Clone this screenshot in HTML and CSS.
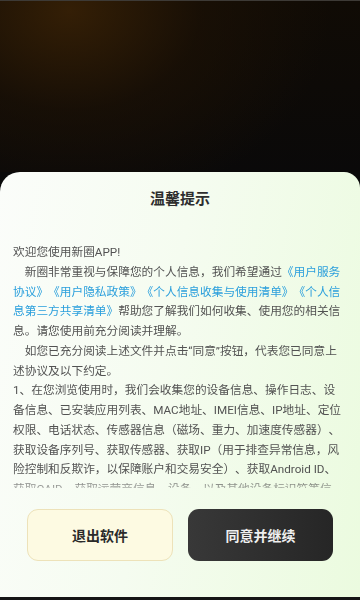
FILE: index.html
```html
<!DOCTYPE html>
<html lang="zh-CN">
<head>
<meta charset="utf-8">
<title>温馨提示</title>
<link rel="stylesheet" href="styles.css">
</head>
<body>
<div class="screen">
  <div class="backdrop"></div>
  <div class="sheet">
    <h1 class="title">温馨提示</h1>
    <div class="content">
      <p class="line">欢迎您使用新圈APP!</p>
      <p class="para">新圈非常重视与保障您的个人信息，我们希望通过<span class="link">《用户服务协议》</span><span class="link">《用户隐私政策》</span><span class="link">《个人信息收集与使用清单》</span><span class="link">《个人信息第三方共享清单》</span>帮助您了解我们如何收集、使用您的相关信息。请您使用前充分阅读并理解。</p>
      <p class="para">如您已充分阅读上述文件并点击“同意”按钮，代表您已同意上述协议及以下约定。</p>
      <p class="line">1、在您浏览使用时，我们会收集您的设备信息、操作日志、设备信息、已安装应用列表、MAC地址、IMEI信息、IP地址、定位权限、电话状态、传感器信息（磁场、重力、加速度传感器）、获取设备序列号、获取传感器、获取IP（用于排查异常信息，风险控制和反欺诈，以保障账户和交易安全）、获取Android ID、获取OAID、获取运营商信息、设备、以及其他设备标识符等信息用于统计分析。</p>
    </div>
    <div class="actions">
      <button class="btn btn-exit">退出软件</button>
      <button class="btn btn-agree">同意并继续</button>
    </div>
  </div>
  <div class="navbar"></div>
</div>
</body>
</html>
```

FILE: styles.css
```css
* {
  box-sizing: border-box;
}

html, body {
  margin: 0;
  padding: 0;
}

body {
  width: 360px;
  height: 600px;
  overflow: hidden;
  background: #0a0a0a;
  font-family: Roboto, "Noto Sans CJK SC", sans-serif;
}

.screen {
  width: 360px;
  height: 600px;
  display: flex;
  flex-direction: column;
}

.backdrop {
  flex: 1;
  border-top: 1px solid #3d3a36;
  background:
    radial-gradient(ellipse 260px 200px at 70px 10px, rgba(58, 34, 6, 0.85) 0%, rgba(30, 18, 5, 0.6) 50%, rgba(10, 10, 10, 0) 100%),
    linear-gradient(to bottom, #100b05 0%, #0a0909 100%);
}

.sheet {
  height: 425px;
  flex: none;
  border-radius: 20px 16px 0 0;
  background: linear-gradient(100deg, #fbfdfa 0%, #f5fcf0 45%, #ebfbdf 100%);
  padding: 16px 17px 36px 13px;
  display: flex;
  flex-direction: column;
}

.title {
  margin: 0;
  height: 22px;
  line-height: 22px;
  font-size: 15px;
  font-weight: 700;
  color: #2e2e2e;
  text-align: center;
  padding-left: 4px;
}

.content {
  margin-top: 33px;
  height: 245px;
  overflow: hidden;
  font-size: 11.7px;
  line-height: 19.75px;
  color: #525252;
  text-spacing-trim: space-all;
  -webkit-mask-image: linear-gradient(to bottom, #000 0, #000 234px, rgba(0,0,0,0.45) 245px);
  mask-image: linear-gradient(to bottom, #000 0, #000 234px, rgba(0,0,0,0.45) 245px);
}

.content p {
  margin: 0;
}

.para {
  text-indent: 1em;
}

.link {
  color: #2a9fdc;
}

.actions {
  margin-top: 21px;
  display: flex;
  justify-content: center;
  gap: 15px;
  padding-left: 4px;
}

.btn {
  width: 146px;
  height: 52px;
  border-radius: 11px;
  font-family: Roboto, "Noto Sans CJK SC", sans-serif;
  font-size: 14px;
  font-weight: 700;
  cursor: pointer;
}

.btn-exit {
  background: #fdfae2;
  border: 1px solid #ede2b9;
  color: #2a2a2a;
}

.btn-agree {
  width: 145px;
  background: linear-gradient(to right, #383838, #262626);
  border: none;
  color: #efefef;
}

.navbar {
  height: 3px;
  flex: none;
  background: #151515;
}
```
